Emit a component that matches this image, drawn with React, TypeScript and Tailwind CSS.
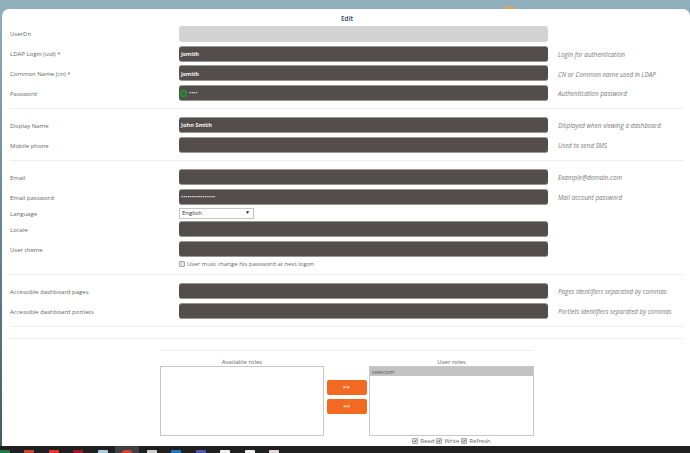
import React from "react";

const font = { fontFamily: '"Open Sans", "Liberation Sans", sans-serif' };

function Check({ checked }: { checked?: boolean }) {
  return (
    <span className="w-[6px] h-[6px] rounded-[1px] border border-[#a8a8a8] bg-[#e2e2e2] flex items-center justify-center shrink-0">
      {checked && (
        <svg viewBox="0 0 6 6" className="w-[6px] h-[6px]">
          <path d="M1 3.2 L2.4 4.6 L5 1.2" fill="none" stroke="#333" strokeWidth="1.1" />
        </svg>
      )}
    </span>
  );
}

function Row({
  label,
  value,
  hint,
  disabled,
  icon,
  dots,
}: {
  label: string;
  value?: string;
  hint?: string;
  disabled?: boolean;
  icon?: boolean;
  dots?: boolean;
}) {
  return (
    <div className="flex items-center h-[20px]">
      <div className="w-[169px] shrink-0 pt-[2px] text-[6px] text-[#666]">{label}</div>
      <div
        className={`w-[369px] shrink-0 h-[16px] rounded-[3px] flex items-center gap-[2px] text-[5.7px] font-bold text-[#f4f0f0] ${
          icon ? "px-[1px]" : "px-[2px]"
        } ${disabled ? "bg-[#d3d3d3]" : "bg-[#544d4d] border-t border-b border-[#9a9595]"}`}
      >
        {icon && (
          <svg viewBox="0 0 8 8" className="w-[7px] h-[7px] shrink-0">
            <circle cx="4" cy="4" r="3.3" fill="none" stroke="#12b01c" strokeWidth="1.2" />
            <path d="M2.4 4 L3.6 5.2 L5.6 2.8" fill="none" stroke="#12b01c" strokeWidth="1" />
          </svg>
        )}
        <span className={`pt-[1px] ${dots ? "font-normal" : ""}`}>{value}</span>
      </div>
      {hint && <div className="ml-[10px] pt-[2px] text-[6.3px] italic text-[#777]">{hint}</div>}
    </div>
  );
}

const Divider = ({ className }: { className: string }) => (
  <div className={`h-px bg-[#eeeeee] w-[674px] ${className}`} />
);

const taskbar = [
  "bg-[#1f7a3d]",
  "bg-[#c8482c]",
  "bg-[#e8322a]",
  "bg-[#a5152a]",
  "bg-[#a9cbe6]",
  "bg-[#d8402f]",
  "bg-[#cfcfcf]",
  "bg-[#1b78c8]",
  "bg-[#4b5bb0]",
  "bg-[#f2f2f2]",
  "bg-[#f2f2f2]",
  "bg-[#e8d8d8]",
];

export default function App() {
  return (
    <div
      className="w-[690px] h-[453px] overflow-hidden flex flex-col antialiased bg-gradient-to-b from-[#8fb0bc] to-[#3f5f68]"
      style={font}
    >
      <div className="h-[9px] shrink-0 flex justify-end pr-[175px] items-end">
        <div className="w-[12px] h-[3px] rounded-t-full bg-[#c9a875]" />
      </div>
      <div className="h-[437px] shrink-0 ml-[2px] bg-white rounded-t-[7px] pl-[8px] flex flex-col overflow-hidden">
        <div className="h-[15px] shrink-0 pt-[5px] flex items-center justify-center text-[6.5px] font-semibold text-[#2d4258] pr-[6px]">
          Edit
        </div>
        <Row label="UserDn" disabled />
        <Row label="LDAP Login (uid) *" value="jsmith" hint="Login for authentication" />
        <Row label="Common Name (cn) *" value="jsmith" hint="CN or Common name used in LDAP" />
        <Row label="Password" value="••••" icon dots hint="Authentication password" />
        <Divider className="mt-[5px]" />
        <div className="mt-[6px]">
          <Row label="Display Name" value="John Smith" hint="Displayed when viewing a dashboard" />
          <Row label="Mobile phone" hint="Used to send SMS" />
        </div>
        <Divider className="mt-[5px]" />
        <div className="mt-[6px]">
          <Row label="Email" hint="Example@domain.com" />
          <Row label="Email password" value="••••••••••••••••" dots hint="Mail account password" />
          <div className="flex items-center h-[12px]">
            <div className="w-[169px] shrink-0 pt-[2px] text-[6px] text-[#666]">Language</div>
            <div className="w-[75px] h-[11px] border border-[#c4c4c4] bg-white flex items-center justify-between px-[2px] text-[6px] text-[#333]">
              <span className="pt-[1px]">English</span>
              <span className="text-[5px] text-[#222] pr-[1px]">▼</span>
            </div>
          </div>
          <Row label="Locale" />
          <Row label="User theme" />
          <div className="h-[9px] pl-[169px] flex items-center gap-[2px] text-[6px] text-[#666]">
            <Check />
            <span className="pt-[1px]">User must change his password at next logon</span>
          </div>
        </div>
        <Divider className="mt-[6px]" />
        <div className="mt-[6px]">
          <Row label="Accessible dashboard pages" hint="Pages identifiers separated by commas" />
          <Row label="Accessible dashboard portlets" hint="Portlets identifiers separated by commas" />
        </div>
        <Divider className="mt-[5px]" />
        <Divider className="mt-[11px]" />
        <div className="ml-[150px] w-[374px] mt-[11px] border-t border-[#eeeeee] text-[6px] text-[#666]">
          <div className="flex justify-between mt-[6px]">
            <div className="w-[164px]">
              <div className="text-center h-[9px] leading-[11px]">Available roles</div>
              <div className="h-[70px] border border-[#c8c8c8]" />
            </div>
            <div className="flex flex-col gap-[4px] pt-[23px] text-[6px] font-bold text-white">
              <div className="w-[40px] h-[15px] pt-[1px] rounded-[2px] bg-[#f26a21] flex items-center justify-center">&gt;&gt;</div>
              <div className="w-[40px] h-[15px] pt-[1px] rounded-[2px] bg-[#f26a21] flex items-center justify-center">&lt;&lt;</div>
            </div>
            <div className="w-[165px]">
              <div className="text-center h-[9px] leading-[11px]">User roles</div>
              <div className="h-[70px] border border-[#c8c8c8]">
                <div className="h-[9px] bg-[#c2c2c2] px-[2px] leading-[11px] text-[#555]">telecom</div>
              </div>
              <div className="flex items-center justify-center gap-[2px] h-[9px] mt-[1px]">
                <Check checked />
                <span className="pt-[1px]">Read</span>
                <Check checked />
                <span className="pt-[1px]">Write</span>
                <Check checked />
                <span className="pt-[1px]">Refresh</span>
              </div>
            </div>
          </div>
        </div>
      </div>
      <div className="h-[7px] shrink-0 bg-[#202020] overflow-hidden">
        <div className="flex items-start -ml-[7.6px]">
          {taskbar.map((c, i) => (
            <div
              key={c + i}
              className={`w-[24.5px] h-[7px] shrink-0 flex justify-center items-start pt-[4px] ${i === 5 ? "bg-[#404040]" : ""}`}
            >
              <div className={`w-[10px] h-[3px] ${i === 5 ? "rounded-t-full" : "rounded-t-[1px]"} ${c}`} />
            </div>
          ))}
        </div>
      </div>
    </div>
  );
}
